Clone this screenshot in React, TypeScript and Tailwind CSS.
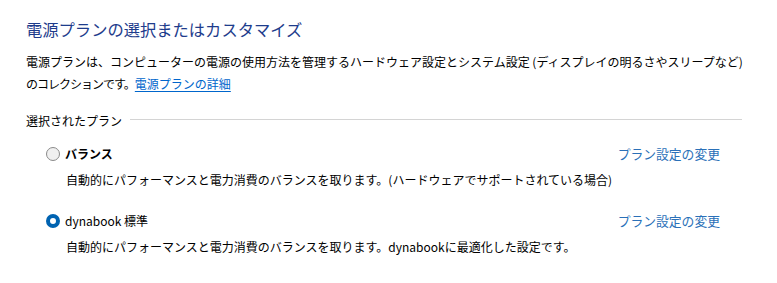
import React from "react";

type Plan = {
  name: string;
  bold?: boolean;
  desc: string;
  checked: boolean;
};

const plans: Plan[] = [
  {
    name: "バランス",
    bold: true,
    desc: "自動的にパフォーマンスと電力消費のバランスを取ります。(ハードウェアでサポートされている場合)",
    checked: false,
  },
  {
    name: "dynabook 標準",
    desc: "自動的にパフォーマンスと電力消費のバランスを取ります。dynabookに最適化した設定です。",
    checked: true,
  },
];

function Radio({ checked }: { checked: boolean }) {
  if (checked) {
    return (
      <span className="box-border inline-block h-[14px] w-[14px] shrink-0 rounded-full border-[4px] border-[#0063b1] bg-white" />
    );
  }
  return (
    <span className="box-border inline-block h-[14px] w-[14px] shrink-0 rounded-full border border-[#8a8a8a] bg-[#f0f0f0]" />
  );
}

export default function App() {
  return (
    <div className="h-[283px] w-[777px] overflow-hidden bg-white text-black font-['Noto_Sans_CJK_JP',sans-serif]">
      <div className="pl-[26px] pr-[35px] pt-[14px]">
        <h1 className="text-[16.3px] leading-[30px] text-[#1e3c8c]">
          電源プランの選択またはカスタマイズ
        </h1>

        <p className="mt-[7px] text-[12px] leading-[22px] whitespace-nowrap">
          電源プランは、コンピューターの電源の使用方法を管理するハードウェア設定とシステム設定 (ディスプレイの明るさやスリープなど)
          <br />
          <span className="tracking-[-1px]">のコレクションです。</span>
          <a href="#" className="text-[#0066cc] underline underline-offset-2">
            電源プランの詳細
          </a>
        </p>

        {/* Selected plans header */}
        <div className="mt-[15px] flex items-center gap-[8px]">
          <span className="text-[12px] leading-[22px] whitespace-nowrap">選択されたプラン</span>
          <div className="h-px flex-1 -translate-y-[2px] bg-[#d4d4d4]" />
        </div>

        <div className="mt-[11px] flex flex-col gap-[19px] pr-[22px]">
          {plans.map((p) => (
            <div key={p.name}>
              <div className="flex items-center pl-[20px] text-[12px] leading-[22px]">
                <Radio checked={p.checked} />
                <span className={["ml-[5px]", p.bold ? "font-bold" : ""].join(" ")}>{p.name}</span>
                <a href="#" className="ml-auto text-[12.8px] text-[#2a70b8]">
                  プラン設定の変更
                </a>
              </div>
              <p className="mt-[4px] pl-[40px] text-[12px] leading-[22px] whitespace-nowrap">{p.desc}</p>
            </div>
          ))}
        </div>
      </div>
    </div>
  );
}
